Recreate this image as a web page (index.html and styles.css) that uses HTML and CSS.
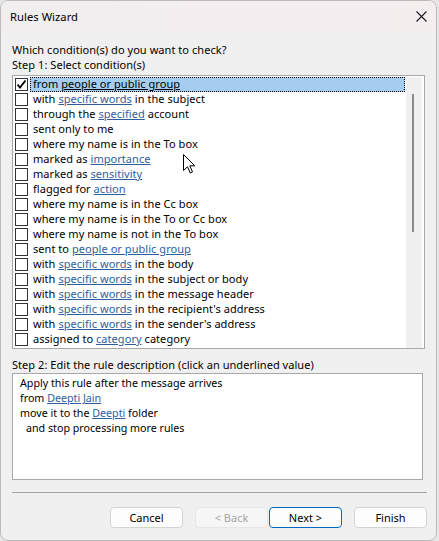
FILE: index.html
```html
<!DOCTYPE html>
<html>
<head>
<meta charset="utf-8">
<link rel="stylesheet" href="styles.css">
</head>
<body>
<div class="window">
  <div class="titlebar">
    <span class="title">Rules Wizard</span>
    <svg class="close" width="11" height="11" viewBox="0 0 11 11"><path d="M0.5 0.5 L10.5 10.5 M10.5 0.5 L0.5 10.5" stroke="#1a1a1a" stroke-width="1.1" fill="none"/></svg>
  </div>
  <div class="content">
    <div class="label first">Which condition(s) do you want to check?</div>
    <div class="label">Step 1: Select condition(s)</div>
    <div class="listbox">
      <div class="items">
        <div class="row"><span class="cb"><svg width="11" height="11" viewBox="0 0 11 11"><path d="M1.5 5.5 L4 8.5 L9.5 1.5" stroke="#000" stroke-width="1.8" fill="none"/></svg></span><span class="txt sel">from <u class="plain">people or public group</u></span></div>
        <div class="row"><span class="cb"></span><span class="txt">with <a>specific words</a> in the subject</span></div>
        <div class="row"><span class="cb"></span><span class="txt">through the <a>specified</a> account</span></div>
        <div class="row"><span class="cb"></span><span class="txt">sent only to me</span></div>
        <div class="row"><span class="cb"></span><span class="txt">where my name is in the To box</span></div>
        <div class="row"><span class="cb"></span><span class="txt">marked as <a>importance</a></span></div>
        <div class="row"><span class="cb"></span><span class="txt">marked as <a>sensitivity</a></span></div>
        <div class="row"><span class="cb"></span><span class="txt">flagged for <a>action</a></span></div>
        <div class="row"><span class="cb"></span><span class="txt">where my name is in the Cc box</span></div>
        <div class="row"><span class="cb"></span><span class="txt">where my name is in the To or Cc box</span></div>
        <div class="row"><span class="cb"></span><span class="txt">where my name is not in the To box</span></div>
        <div class="row"><span class="cb"></span><span class="txt">sent to <a>people or public group</a></span></div>
        <div class="row"><span class="cb"></span><span class="txt">with <a>specific words</a> in the body</span></div>
        <div class="row"><span class="cb"></span><span class="txt">with <a>specific words</a> in the subject or body</span></div>
        <div class="row"><span class="cb"></span><span class="txt">with <a>specific words</a> in the message header</span></div>
        <div class="row"><span class="cb"></span><span class="txt">with <a>specific words</a> in the recipient's address</span></div>
        <div class="row"><span class="cb"></span><span class="txt">with <a>specific words</a> in the sender's address</span></div>
        <div class="row"><span class="cb"></span><span class="txt">assigned to <a>category</a> category</span></div>
      </div>
      <div class="scrollbar"><div class="thumb"></div></div>
    </div>
    <div class="label step2">Step 2: Edit the rule description (click an underlined value)</div>
    <div class="desc">
      <div>Apply this rule after the message arrives</div>
      <div>from <a>Deepti Jain</a></div>
      <div>move it to the <a>Deepti</a> folder</div>
      <div class="indent">and stop processing more rules</div>
    </div>
    <div class="sep"></div>
    <div class="buttons">
      <button class="btn">Cancel</button>
      <button class="btn disabled back">&lt; Back</button>
      <button class="btn primary">Next &gt;</button>
      <button class="btn finish">Finish</button>
    </div>
  </div>
</div>
<svg class="cursor" width="13" height="20" viewBox="0 0 13 20"><path d="M0.5 0.5 L0.5 16.5 L4.5 12.8 L7.3 19 L9.5 18 L6.8 11.8 L11.8 11.8 Z" fill="#fff" stroke="#000" stroke-width="1"/></svg>
</body>
</html>
```
FILE: styles.css
```css
html, body {
  margin: 0;
  padding: 0;
  background: #e6e6e6;
}
body {
  font-family: "Noto Sans", "Open Sans", sans-serif;
  font-size: 11px;
  letter-spacing: 0.05px;
  color: #000;
  position: relative;
  width: 439px;
  height: 541px;
  overflow: hidden;
}
.window {
  width: 435px;
  height: 539px;
  border: 1px solid #bcbcbc;
  border-radius: 8px;
  background: #f0f0f0;
  overflow: hidden;
  display: flex;
  flex-direction: column;
}
.titlebar {
  height: 31px;
  flex: none;
  display: flex;
  align-items: center;
  justify-content: space-between;
  padding: 0 8px 0 9px;
  background: linear-gradient(to right, #f0eeee, #f5eef0 60%, #f4eeef);
}
.title {
  font-size: 11.2px;
  line-height: 16px;
}
.close {
  display: block;
  margin-right: 1px;
}
.content {
  padding: 9px 9px 0 11px;
  display: flex;
  flex-direction: column;
}
.label {
  line-height: 15px;
  height: 15px;
  white-space: nowrap;
}
.first {
  margin-top: 1px;
}
.listbox {
  margin-top: 3px;
  width: 409px;
  height: 271px;
  border: 1px solid #a8a8a8;
  background: #fff;
  display: flex;
  padding: 1px 1px 0 1px;
  box-sizing: content-box;
}
.items {
  flex: 1;
  display: flex;
  flex-direction: column;
}
.row {
  height: 15px;
  display: flex;
  align-items: center;
  white-space: nowrap;
}
.cb {
  width: 11px;
  height: 11px;
  border: 1px solid #333;
  margin-left: 1px;
  margin-right: 2px;
  background: #fff;
  display: flex;
  align-items: center;
  justify-content: center;
}
.cb svg {
  display: block;
}
.txt {
  height: 15px;
  padding-left: 2px;
  box-sizing: border-box;
  flex: 1;
  border: 1px solid transparent;
  line-height: 12px;
}
.txt.sel {
  background: #a4cdf0;
  border: 1px dotted #000;
}
a {
  color: #2e5e9e;
  text-decoration: underline;
}
u.plain {
  text-decoration: underline;
}
.scrollbar {
  width: 16px;
  margin-left: 1px;
  margin-right: 1px;
  background: #f0f0f0;
  position: relative;
  flex: none;
}
.thumb {
  position: absolute;
  left: 6px;
  top: 17px;
  width: 2px;
  height: 138px;
  background: #8a8a8a;
}
.step2 {
  margin-top: 8px;
}
.desc {
  margin-top: 1px;
  width: 402px;
  height: 103px;
  border: 1px solid #a8a8a8;
  background: #fff;
  padding: 2px 0 0 7px;
  font-size: 10.7px;
  letter-spacing: 0;
  line-height: 15px;
  white-space: nowrap;
}
.indent {
  padding-left: 6px;
}
.sep {
  margin-top: 12px;
  height: 1px;
  width: 415px;
  background: #a0a0a0;
}
.buttons {
  margin-top: 14px;
  display: flex;
  justify-content: flex-end;
  width: 415px;
}
.btn {
  width: 73px;
  height: 21px;
  box-sizing: border-box;
  font-family: "Noto Sans", "Open Sans", sans-serif;
  font-size: 11px;
  color: #000;
  background: #fdfdfd;
  border: 1px solid #d3d3d3;
  border-radius: 4px;
  padding: 0;
  line-height: 17px;
}
.btn.back {
  margin-left: 12px;
}
.btn.disabled {
  background: #f6f6f6;
  border-color: #e6e6e6;
  color: #a6a6a6;
}
.btn.primary {
  margin-left: 1px;
  border-color: #0067c0;
}
.btn.finish {
  margin-left: 12px;
}
.cursor {
  position: absolute;
  left: 183px;
  top: 154px;
}
```
